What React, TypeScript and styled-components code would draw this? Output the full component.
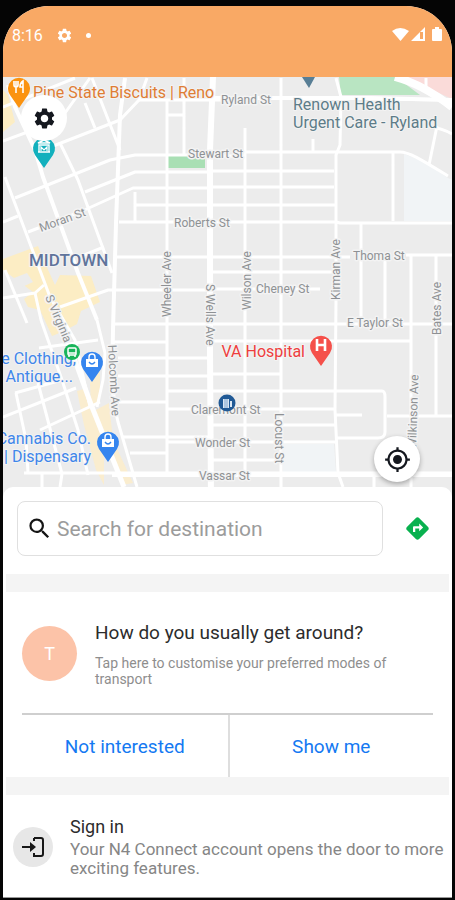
import React from "react";
import styled, { createGlobalStyle } from "styled-components";
import { MdDirections, MdMyLocation, MdSearch, MdSettings } from "react-icons/md";

const GlobalStyle = createGlobalStyle`
  *, *::before, *::after { box-sizing: border-box; }
  body {
    margin: 0;
    background: #050505;
    font-family: Roboto, "Liberation Sans", sans-serif;
    color: #2c2c2c;
  }
  button, input { font: inherit; color: inherit; }
`;

const Phone = styled.div`
  display: flex;
  flex-direction: column;
  min-height: 100vh;
  padding: 6px 3px 2px;
`;

const Screen = styled.main`
  flex: 1;
  display: flex;
  flex-direction: column;
  overflow: hidden;
  border-radius: 46px 46px 0 0;
  background: #fff;
  border-bottom: 1px solid #999;
`;

const StatusBar = styled.header`
  display: flex;
  justify-content: space-between;
  align-items: flex-start;
  height: 71px;
  padding: 18px 9px 0 9px;
  background: #f9a965;
  color: #fff;
`;

const StatusGroup = styled.div<{ $gap: number }>`
  display: flex;
  align-items: center;
  gap: ${(p) => p.$gap}px;
  height: 22px;
  font-size: 16px;
`;

const Dot = styled.span`
  width: 5px;
  height: 5px;
  border-radius: 50%;
  background: #fff;
`;

const MapArea = styled.section`
  position: relative;
  height: 422px;
  background: #ececec;
`;

const MapDrawing = styled.svg`
  display: block;
  width: 100%;
  height: 100%;
`;

const RoundButton = styled.button<{ $corner: "top" | "bottom" }>`
  position: absolute;
  ${(p) => (p.$corner === "top" ? "top: 18px; left: 18px;" : "bottom: 17px; right: 32px;")}
  display: flex;
  align-items: center;
  justify-content: center;
  width: 46px;
  height: 46px;
  padding: 0;
  border: 0;
  border-radius: 50%;
  background: #fff;
  color: #15181f;
  box-shadow: ${(p) => (p.$corner === "top" ? "none" : "0 2px 5px rgba(0, 0, 0, 0.3)")};
`;

const Sheet = styled.section`
  position: relative;
  flex: 1;
  margin-top: -12px;
  border-radius: 10px 10px 0 0;
  background: #fff;
`;

const SearchRow = styled.form`
  display: flex;
  align-items: center;
  gap: 18px;
  padding: 14px 18px 18px 14px;
`;

const SearchField = styled.label`
  flex: 1;
  min-width: 0;
  display: flex;
  align-items: center;
  gap: 4px;
  height: 55px;
  padding: 0 8px;
  border: 1px solid #e0e0e0;
  border-radius: 8px;
  color: #151515;
`;

const SearchInput = styled.input`
  flex: 1;
  min-width: 0;
  padding: 0;
  border: 0;
  outline: 0;
  background: none;
  font-size: 21px;
  &::placeholder { color: #9c9c9c; opacity: 1; }
`;

const PlainIconButton = styled.button`
  display: flex;
  padding: 3px;
  border: 0;
  background: none;
  color: #09b14f;
`;

const Band = styled.div`
  height: 18px;
  margin: 0 3px;
  background: #f4f4f4;
`;

const PromptCard = styled.section`
  padding: 0 19px;
`;

const PromptBody = styled.div`
  display: flex;
  align-items: flex-start;
  gap: 18px;
  padding: 28px 0 26px;
`;

const Avatar = styled.div`
  flex: none;
  display: flex;
  align-items: center;
  justify-content: center;
  width: 55px;
  height: 55px;
  margin-top: 6px;
  border-radius: 50%;
  background: #fcc3a8;
  color: #fff;
  font-size: 18px;
`;

const Copy = styled.div`
  min-width: 0;
`;

const PromptTitle = styled.h2`
  margin: 0 0 10px;
  font-size: 19px;
  line-height: 25px;
  font-weight: 400;
`;

const PromptText = styled.p`
  margin: 0;
  font-size: 14px;
  line-height: 16px;
  color: #8e8e8e;
`;

const Actions = styled.div`
  display: grid;
  grid-template-columns: 1fr 1fr;
  border-top: 2px solid #cfcfcf;
`;

const ActionButton = styled.button`
  height: 62px;
  padding: 0;
  border: 0;
  background: none;
  color: #1479f2;
  font-size: 19px;
  & + & { border-left: 2px solid #dedede; }
`;

const SignInLink = styled.a`
  display: flex;
  align-items: flex-start;
  gap: 17px;
  padding: 20px 8px 16px 10px;
  color: inherit;
  text-decoration: none;
`;

const SignInBadge = styled.span`
  flex: none;
  display: flex;
  align-items: center;
  justify-content: center;
  width: 40px;
  height: 40px;
  margin-top: 12px;
  border-radius: 50%;
  background: #e7e7e7;
`;

const SignInTitle = styled.h2`
  margin: 0 0 1px;
  font-size: 18px;
  line-height: 24px;
  font-weight: 400;
`;

const SignInText = styled.p`
  margin: 0;
  font-size: 17px;
  line-height: 19px;
  color: #868686;
`;

const StreetName = styled.text`
  font-size: 12px;
  fill: #8e9194;
  stroke: #f3f3f3;
  stroke-width: 3px;
  stroke-linejoin: round;
  paint-order: stroke;
`;

const PlaceName = styled.text`
  font-size: 16px;
  stroke: #f3f3f3;
  stroke-width: 2px;
  stroke-linejoin: round;
  paint-order: stroke;
`;

const DistrictName = styled(PlaceName)`
  font-size: 17px;
  font-weight: 500;
  fill: #60749b;
`;

type Street = { name: string; x: number; y: number; turn?: number };

const streets: Street[] = [
  { name: "Ryland St", x: 221, y: 104 },
  { name: "Stewart St", x: 188, y: 158 },
  { name: "Roberts St", x: 174, y: 227 },
  { name: "Thoma St", x: 353, y: 260 },
  { name: "Cheney St", x: 256, y: 293 },
  { name: "E Taylor St", x: 347, y: 327 },
  { name: "Claremont St", x: 191, y: 414 },
  { name: "Wonder St", x: 195, y: 447 },
  { name: "Vassar St", x: 199, y: 480 },
  { name: "Moran St", x: 41, y: 232, turn: -20 },
  { name: "Wheeler Ave", x: 171, y: 317, turn: -90 },
  { name: "Wilson Ave", x: 251, y: 310, turn: -90 },
  { name: "Kirman Ave", x: 340, y: 300, turn: -90 },
  { name: "Bates Ave", x: 441, y: 335, turn: -90 },
  { name: "Wilkinson Ave", x: 416, y: 449, turn: -88 },
  { name: "S Wells Ave", x: 206, y: 284, turn: 90 },
  { name: "Locust St", x: 275, y: 413, turn: 90 },
  { name: "Holcomb Ave", x: 108, y: 345, turn: 87 },
  { name: "S Virginia", x: 45, y: 297, turn: 67 },
];

const roads = [
  "M3 107L75 78M3 141L60 120L90 78M43 150L120 120L139 100L147 78M15 198L110 160L135 155H209",
  "M3 222L18 216M28 232L80 212L133 188H209M85 192L135 172H209M82 256L104 247M3 298L35 293L44 285M60 307L108 290H209",
  "M39 348L98 340M15 393L62 380M3 417L76 388M40 430L100 402",
  "M139 100H221M167 115H184M184 78V156M92 78L120 150M85 103L95 128",
  "M60 143L78 180L112 273M5 177L20 217L50 297L75 340L90 407M5 270L27 323M35 293L41 320L62 380L78 430L88 475",
  "M97 320L105 353L103 380L97 407M113 400L118 422L137 487M16 393L26 440L28 473M38 383L62 474M24 473H455M62 474L60 487M42 474V487",
  "M167 100V473M245 128V473M281 78V487M336 78L341 97L340 145L336 155V300L335 410L338 473L343 487",
  "M135 192V221M119 222H336L340 223H452M136 205H336M209 156H245M245 152H400C410 152 425 162 448 176",
  "M209 171H334M209 187H334M115 257H336M119 257H350M406 255H452M212 272H334M212 289H320M112 324H452",
  "M112 342H166M118 358H209M118 376H209M119 402H166M123 437H209M130 453H166M166 391H209M166 409H209M167 442H209",
  "M212 341H410M212 374H281M212 391H382Q385 391 385 397V432Q385 438 378 438H336M212 409H335M336 415H362M212 425H335M212 442H335M212 460H281",
  "M361 223V320M385 260V322M411 255V487M436 255V415M387 416H452M393 152V221M313 139V151M437 126L429 165M370 99L452 100M374 473V487",
  "M430 127Q442 128 452 134M426 78V87",
];

const avenues = ["M125 78L120 115L116 223L113 330L112 380L114 402"];

function Pin({ x, y, color, children }: { x: number; y: number; color: string; children?: React.ReactNode }) {
  return (
    <g transform={`translate(${x} ${y})`}>
      <path d="M0 21L-9 8A11 11 0 1 1 9 8Z" fill={color} />
      {children}
    </g>
  );
}

const ShoppingBag = () => (
  <>
    <path d="M-6-2H6V6H-6Z" fill="#fff" />
    <path d="M-3-2V-4A3 3 0 0 1 3-4V-2" fill="none" stroke="#fff" strokeWidth="1.4" />
    <path d="M-3 1Q0 5 3 1" fill="none" stroke="#3585ef" strokeWidth="1.3" />
  </>
);

function CityMap() {
  return (
    <MapDrawing viewBox="3 77 449 422" preserveAspectRatio="xMidYMid slice" role="img" aria-label="Map of Midtown">
      <path fill="#ececec" d="M-400 77H900V499H-400Z" />
      <path fill="#b9e5c2" d="M339 77H396L420 95H341Z" />
      <path fill="#fadbd9" d="M404 77H452V99L428 88Z" />
      <path fill="#a9dfb4" d="M167 156H205V168H167Z" />
      <path fill="#f1f4f6" d="M404 154L425 162L448 178L452 180V221H404Z" />
      <path fill="#f1f4f6" d="M283 444H334L336 472H283Z" />
      <path
        fill="#fcedc4"
        d="M3 90L8 95L15 122L3 132ZM3 259L38 246L44 261L55 285L60 275L91 276L100 302L81 311L77 324L62 332L52 336L40 310L28 307L24 299L33 292L14 278L3 270Z"
      />
      <path fill="#ececec" d="M14 278L27 273L33 282L20 288Z" />
      <path fill="#faedcf" d="M90 383L100 370V400L91 407ZM77 391L84 389L92 412L109 403L113 440L133 483L122 485L104 440V485L96 470L84 425Z" />
      <g fill="none" stroke="#fff" strokeWidth="3" strokeLinejoin="round">
        {roads.map((d) => (
          <path key={d} d={d} />
        ))}
      </g>
      <g fill="none" stroke="#fff" strokeWidth="4" strokeLinejoin="round">
        {avenues.map((d) => (
          <path key={d} d={d} />
        ))}
        <path d="M8 85L15 107L35 150L43 177L78 273L97 320" />
        <path d="M212 98H370L452 100" />
        <path d="M112 475H452" />
        <path d="M70 347L92 407L124 487" strokeWidth="5" />
        <path d="M213 77L210 150V350L211 499" strokeWidth="6" />
        <path d="M395 77Q422 84 452 107" strokeWidth="8" />
      </g>
      {streets.map((s) => (
        <StreetName key={s.name} transform={`translate(${s.x} ${s.y}) rotate(${s.turn ?? 0})`}>
          {s.name}
        </StreetName>
      ))}

      <DistrictName x="29" y="266">MIDTOWN</DistrictName>
      <PlaceName x="33" y="98" fill="#df7d34">Pine State Biscuits | Reno</PlaceName>
      <PlaceName x="293" y="110" fill="#5d7c88">Renown Health</PlaceName>
      <PlaceName x="293" y="128" fill="#5d7c88">Urgent Care - Ryland</PlaceName>
      <PlaceName x="305" y="357" textAnchor="end" fill="#ee3e3e">VA Hospital</PlaceName>
      <PlaceName x="76" y="364" textAnchor="end" fill="#3f86ea">e Clothing,</PlaceName>
      <PlaceName x="73" y="382" textAnchor="end" fill="#3f86ea">&amp; Antique...</PlaceName>
      <PlaceName x="91" y="444" textAnchor="end" fill="#3f86ea">Cannabis Co.</PlaceName>
      <PlaceName x="91" y="462" textAnchor="end" fill="#3f86ea">| Dispensary</PlaceName>

      <path d="M302 77H315L309 88Z" fill="#587e95" />
      <Pin x={19} y={87} color="#fb9310">
        <path d="M-5-6V-2Q-5 0-3 0T-1-2V-6M-3-6V6M4 6V-6Q1-4 1 0H4" fill="none" stroke="#fff" strokeWidth="1.6" />
      </Pin>
      <Pin x={44} y={147} color="#12b0bd">
        <path d="M-6-4L0-7L6-4ZM-5-2H5V5H-5ZM-6 5H6" fill="none" stroke="#fff" strokeWidth="1.4" />
        <path d="M-3 4V0L0 3L3 0V4" fill="none" stroke="#fff" strokeWidth="1.2" />
      </Pin>
      <Pin x={92} y={361} color="#3585ef"><ShoppingBag /></Pin>
      <Pin x={108} y={441} color="#3585ef"><ShoppingBag /></Pin>
      <Pin x={321} y={345} color="#f5504a">
        <path d="M-4-6V6M4-6V6M-4 0H4" fill="none" stroke="#fff" strokeWidth="2.6" />
      </Pin>
      <g transform="translate(72 352)">
        <circle r="8" fill="#19b45a" />
        <rect x="-4" y="-4" width="8" height="7" rx="1" fill="none" stroke="#fff" strokeWidth="1.5" />
        <path d="M-4 1H4M-3 3V5M3 3V5" stroke="#fff" strokeWidth="1.5" />
      </g>
      <g transform="translate(227 403)">
        <circle r="8.5" fill="#205995" />
        <path d="M-4-4H2V5H-4ZM3-2H5V4H3Z" fill="#dce8f4" />
        <path d="M-2-4V5M0-4V5" stroke="#7fa4cb" />
      </g>
    </MapDrawing>
  );
}

const StatusSignals = () => (
  <svg width="52" height="16" viewBox="0 0 52 16" fill="#fff" aria-label="Wi-Fi, signal and battery" role="img">
    <path d="M1 4Q9-2 18 4L9.500 14Z" />
    <path d="M34 0V14H20ZM32 5H29V12H32Z" fillRule="evenodd" />
    <path d="M44 0H48V2H50Q51 2 51 3V13Q51 14 50 14H42Q41 14 41 13V3Q41 2 42 2H44Z" />
  </svg>
);

const SignInIcon = () => (
  <svg width="26" height="26" viewBox="0 0 26 26" fill="none" stroke="#171717" strokeWidth="2" aria-hidden="true">
    <path d="M14 4H21Q23 4 23 6V20Q23 22 21 22H14V19M14 4V7" />
    <path d="M2 13H12" />
    <path d="M10 8L16 13L10 18Z" fill="#171717" stroke="none" />
  </svg>
);

export default function App() {
  return (
    <>
      <GlobalStyle />
      <Phone>
        <Screen>
          <StatusBar>
            <StatusGroup $gap={13}>
              <span>8:16</span>
              <MdSettings size={17} aria-hidden />
              <Dot />
            </StatusGroup>
            <StatusGroup $gap={4}>
              <StatusSignals />
            </StatusGroup>
          </StatusBar>

          <MapArea>
            <CityMap />
            <RoundButton type="button" $corner="top" aria-label="Settings">
              <MdSettings size={25} />
            </RoundButton>
            <RoundButton type="button" $corner="bottom" aria-label="My location">
              <MdMyLocation size={27} />
            </RoundButton>
          </MapArea>

          <Sheet>
            <SearchRow onSubmit={(e) => e.preventDefault()}>
              <SearchField>
                <MdSearch size={27} aria-hidden />
                <SearchInput type="text" placeholder="Search for destination" aria-label="Search for destination" />
              </SearchField>
              <PlainIconButton type="submit" aria-label="Directions">
                <MdDirections size={27} />
              </PlainIconButton>
            </SearchRow>
            <Band />
            <PromptCard>
              <PromptBody>
                <Avatar>T</Avatar>
                <Copy>
                  <PromptTitle>How do you usually get around?</PromptTitle>
                  <PromptText>Tap here to customise your preferred modes of transport</PromptText>
                </Copy>
              </PromptBody>
              <Actions>
                <ActionButton type="button">Not interested</ActionButton>
                <ActionButton type="button">Show me</ActionButton>
              </Actions>
            </PromptCard>
            <Band />
            <SignInLink href="#sign-in">
              <SignInBadge>
                <SignInIcon />
              </SignInBadge>
              <Copy>
                <SignInTitle>Sign in</SignInTitle>
                <SignInText>Your N4 Connect account opens the door to more exciting features.</SignInText>
              </Copy>
            </SignInLink>
          </Sheet>
        </Screen>
      </Phone>
    </>
  );
}
